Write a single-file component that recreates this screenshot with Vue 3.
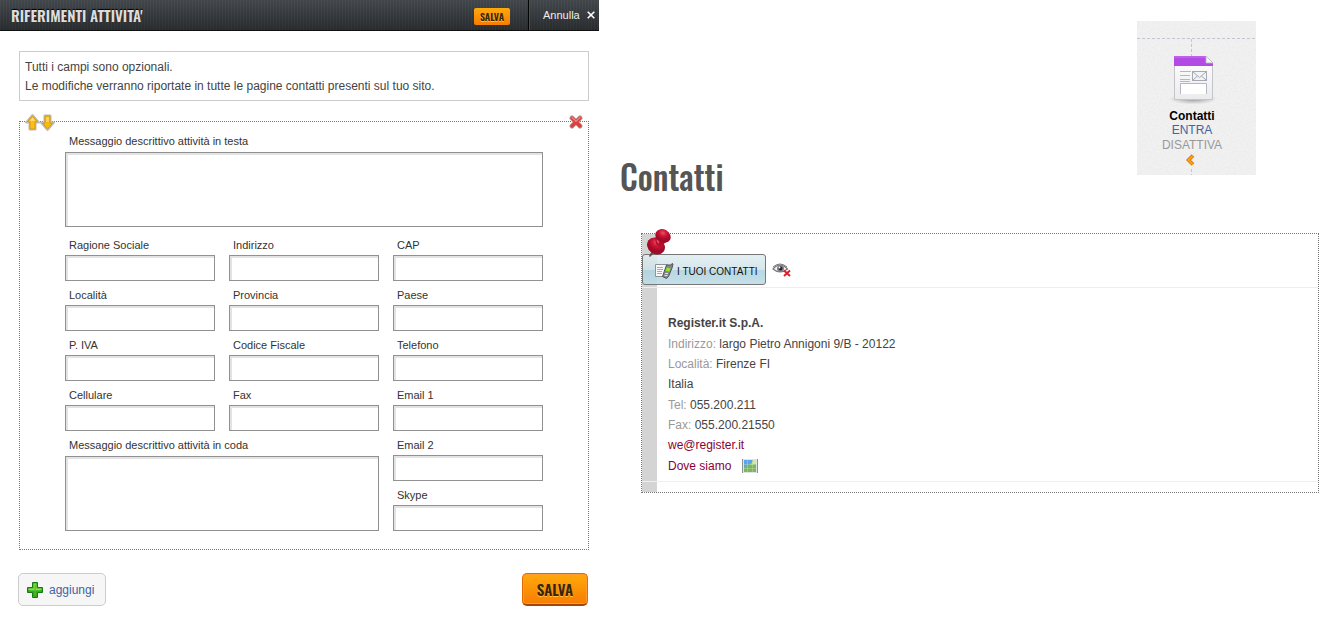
<script setup>
import { ref } from 'vue'

const rows = [
  [
    { id: 'ragione', label: 'Ragione Sociale' },
    { id: 'indirizzo', label: 'Indirizzo' },
    { id: 'cap', label: 'CAP' },
  ],
  [
    { id: 'localita', label: 'Località' },
    { id: 'provincia', label: 'Provincia' },
    { id: 'paese', label: 'Paese' },
  ],
  [
    { id: 'piva', label: 'P. IVA' },
    { id: 'cf', label: 'Codice Fiscale' },
    { id: 'telefono', label: 'Telefono' },
  ],
  [
    { id: 'cellulare', label: 'Cellulare' },
    { id: 'fax', label: 'Fax' },
    { id: 'email1', label: 'Email 1' },
  ],
]
const fields = rows.flat()
const values = ref({})

const contact = [
  { label: 'Indirizzo:', value: 'largo Pietro Annigoni 9/B - 20122' },
  { label: 'Località:', value: 'Firenze FI' },
  { label: '', value: 'Italia' },
  { label: 'Tel:', value: '055.200.211' },
  { label: 'Fax:', value: '055.200.21550' },
]
</script>

<template>
  <main class="page">
    <form class="editor" @submit.prevent>
      <header class="bar">
        <h2 class="bar-title">RIFERIMENTI ATTIVITA'</h2>
        <button type="submit" class="save save-small">SALVA</button>
        <button type="button" class="cancel">
          Annulla
          <svg class="cancel-x" viewBox="0 0 8 8" aria-hidden="true">
            <path d="M.7 .7L7.300 7.300M7.300 .7L.7 7.300" stroke="#fff" stroke-width="1.600" />
          </svg>
        </button>
      </header>

      <div class="editor-body">
        <p class="notice">
          Tutti i campi sono opzionali.<br />
          Le modifiche verranno riportate in tutte le pagine contatti presenti sul tuo sito.
        </p>

        <section class="block">
          <div class="movers">
            <button type="button" class="icon-btn" aria-label="Sposta su">
              <svg viewBox="0 0 15 17">
                <path d="M7.500 1L14 8.500H10.500V15.500H4.500V8.500H1Z" fill="#f5b613" stroke="#bdbdbd" stroke-width="2" stroke-linejoin="round" />
                <path d="M7.500 2L12.500 7.800H10V15H5V7.800H2.500Z" fill="#fbbd18" stroke="#d99a08" stroke-width="1" />
                <path d="M7.500 3.500L10 6.800H5Z" fill="#ffe08a" />
              </svg>
            </button>
            <button type="button" class="icon-btn" aria-label="Sposta giù">
              <svg viewBox="0 0 15 17">
                <path d="M7.500 16L14 8.500H10.500V1.500H4.500V8.500H1Z" fill="#f5b613" stroke="#bdbdbd" stroke-width="2" stroke-linejoin="round" />
                <path d="M7.500 15L12.500 9.200H10V2H5V9.200H2.500Z" fill="#fbb80c" stroke="#d99a08" stroke-width="1" />
                <path d="M6 3H9V8H6Z" fill="#fdd256" />
              </svg>
            </button>
          </div>
          <button type="button" class="icon-btn remove" aria-label="Elimina">
            <svg viewBox="0 0 14 14">
              <path d="M3 3L11 11M11 3L3 11" stroke="#b9a3a3" stroke-width="5" stroke-linecap="round" />
              <path d="M3 3L11 11M11 3L3 11" stroke="#dd3f3c" stroke-width="3.400" stroke-linecap="round" />
              <path d="M3 2.500L7 6.500L11 2.500" stroke="#f08582" stroke-width="1.200" fill="none" stroke-linecap="round" />
            </svg>
          </button>

          <div class="field field-head">
            <label for="testa">Messaggio descrittivo attività in testa</label>
            <textarea id="testa"></textarea>
          </div>

          <div class="grid">
            <div v-for="f in fields" :key="f.id" class="field">
              <label :for="f.id">{{ f.label }}</label>
              <input :id="f.id" v-model="values[f.id]" type="text" />
            </div>
            <div class="field field-tail">
              <label for="coda">Messaggio descrittivo attività in coda</label>
              <textarea id="coda"></textarea>
            </div>
            <div class="field">
              <label for="email2">Email 2</label>
              <input id="email2" type="text" />
            </div>
            <div class="field">
              <label for="skype">Skype</label>
              <input id="skype" type="text" />
            </div>
          </div>
        </section>

        <footer class="actions">
          <button type="button" class="add">
            <svg viewBox="0 0 16 16" aria-hidden="true">
              <path d="M5.500 .5H10.500V5.500H15.500V10.500H10.500V15.500H5.500V10.500H.5V5.500H5.500Z" fill="#35a51c" stroke="#187a12" />
              <path d="M6.500 1.500H9.500V6.500H14.500V8H1.500V6.500H6.500Z" fill="#8ee04e" />
              <path d="M7.500 2.500H8.800V8H13.500V9.200H8.800V13.500H7.500V9.200H2.500V8H7.500Z" fill="#4cc02c" />
            </svg>
            aggiungi
          </button>
          <button type="submit" class="save save-large">SALVA</button>
        </footer>
      </div>
    </form>

    <section class="preview">
      <div class="top">
        <h1>Contatti</h1>
        <nav class="tile">
          <svg class="grain" aria-hidden="true">
            <filter id="paper">
              <feTurbulence type="fractalNoise" baseFrequency="0.5" numOctaves="2" />
              <feColorMatrix values="0 0 0 0 .5  0 0 0 0 .5  0 0 0 0 .5  .24 0 0 0 -.09" />
            </filter>
            <rect width="100%" height="100%" filter="url(#paper)" />
          </svg>
          <svg class="doc" viewBox="-1 -1 50 50" aria-hidden="true">
            <defs>
              <linearGradient id="docfill" x1="0" y1="0" x2="0" y2="1">
                <stop offset="0" stop-color="#fff" />
                <stop offset="1" stop-color="#ebebee" />
              </linearGradient>
              <radialGradient id="shade">
                <stop offset="0" stop-color="#777" stop-opacity=".8" />
                <stop offset="1" stop-color="#999" stop-opacity="0" />
              </radialGradient>
            </defs>
            <ellipse cx="25" cy="43" rx="24" ry="5.500" fill="url(#shade)" />
            <path d="M6.500 .5H38L44.500 7V43.500H6.500Z" fill="url(#docfill)" stroke="#c3c3ca" />
            <path d="M6 0H38V7H45V10H6Z" fill="#b24be3" />
            <path d="M6 0H38V2H6Z" fill="#bd62e8" />
            <path d="M38 0V7H45Z" fill="#f6f6f8" stroke="#b9b5c2" stroke-width=".8" />
            <path d="M12 15.500H23M12 19.500H22M12 23.500H22M12 25.500H22" stroke="#b5b8c0" />
            <rect x="24.500" y="15.500" width="14" height="9" fill="#f2f3f5" stroke="#a5a9b3" />
            <path d="M25 16L31.500 21.500L38 16M25 24L29.500 20M38 24L33.500 20" fill="none" stroke="#a5a9b3" />
            <path d="M13 28H38V38H13Z" fill="#fff" />
            <path d="M12.500 38V27.500H38.500V38" fill="none" stroke="#b5b8c0" />
          </svg>
          <strong>Contatti</strong>
          <a href="#entra">ENTRA</a>
          <a href="#disattiva" class="off">DISATTIVA</a>
          <svg class="chevron" viewBox="0 0 9 12" aria-hidden="true">
            <path d="M7 1.500L2.500 6L7 10.500" fill="none" stroke="#d9780a" stroke-width="3.600" />
            <path d="M7 1.500L2.500 6L7 10.500" fill="none" stroke="#ffa71e" stroke-width="1.600" />
          </svg>
        </nav>
      </div>

      <article class="card">
        <svg class="pin" viewBox="0 0 28 30" aria-hidden="true">
          <defs>
            <radialGradient id="pinred" cx=".4" cy=".3">
              <stop offset="0" stop-color="#ea5068" />
              <stop offset=".5" stop-color="#cd1434" />
              <stop offset="1" stop-color="#a00a28" />
            </radialGradient>
          </defs>
          <path d="M8 23L10 25L6 29L5 28Z" fill="#555" />
          <ellipse cx="12" cy="18" rx="9.500" ry="8" transform="rotate(38 12 18)" fill="url(#pinred)" />
          <path d="M11 10L15 6L22 13L18 19Q15 20 12 16Z" fill="#b90c2b" />
          <path d="M12.500 12L15 9L17 11L14 16Z" fill="#e2526a" />
          <ellipse cx="19" cy="8" rx="8" ry="6.500" transform="rotate(30 19 8)" fill="url(#pinred)" />
        </svg>
        <div class="card-head">
          <button type="button" class="tab">
            <svg viewBox="0 0 20 18" aria-hidden="true">
              <path d="M1.500 2.500H13.500V14.500H1.500Z" fill="#f8f8f8" stroke="#8c9296" />
              <path d="M3 5.500H9M3 7.500H9M3 9.500H8M3 11.500H8" stroke="#a5aaad" />
              <path d="M12.500 3L17 3L18 1.500L19 2L18 6L14.500 14.500L12.500 16.500L8.500 14.500Z" fill="#85898c" stroke="#505457" />
              <path d="M12.800 5.500L16.500 6.500L15.300 9.500L11.600 8.700Z" fill="#8eea22" />
              <path d="M11 11.500H14M10.500 13.500H13.500" stroke="#ddd" />
            </svg>
            I TUOI CONTATTI
          </button>
          <button type="button" class="icon-btn eye" aria-label="Nascondi">
            <svg viewBox="0 0 19 14">
              <path d="M1 6Q8 -2 15.500 6Q8 12 1 6Z" fill="#f5f5f5" stroke="#77777b" stroke-width="1.200" />
              <path d="M1 4Q8 -2 15 4" fill="none" stroke="#77777b" />
              <circle cx="8.500" cy="5.500" r="3.500" fill="#7d808a" />
              <circle cx="8.500" cy="5.500" r="1.900" fill="#24262b" />
              <circle cx="7.500" cy="4.500" r=".9" fill="#fff" />
              <path d="M12 7.500L18 13M18 7.500L12 13" stroke="#d9212b" stroke-width="2" />
            </svg>
          </button>
        </div>
        <address class="details">
          <strong>Register.it S.p.A.</strong>
          <span v-for="c in contact" :key="c.value">
            <span v-if="c.label" class="key">{{ c.label }}&nbsp;</span>{{ c.value }}
          </span>
          <a href="mailto:we@register.it">we@register.it</a>
          <a href="#mappa">
            Dove siamo
            <svg class="map" viewBox="0 0 16 14" aria-hidden="true">
              <rect width="16" height="14" fill="#dfe5e5" />
              <rect x="2" y="1" width="12" height="12" fill="#7db363" />
              <path d="M2 1H12L10 4L8 4L6 7L2 8Z" fill="#5ba4ea" />
              <path d="M11 1H14V5L9 6Z" fill="#d8e6a0" />
              <path d="M2 5.500H14M2 9.500H14M5.500 1V13M10.500 1V13" stroke="#b9dc9c" stroke-opacity=".45" />
              <path d="M.5 0V14M15.500 0V14" stroke="#8b9296" />
            </svg>
          </a>
        </address>
      </article>
    </section>
  </main>
</template>

<style>
body {
  background: #fff;
}
</style>

<style scoped>
.page {
  display: grid;
  grid-template-columns: minmax(0, 599fr) minmax(0, 739fr);
  align-items: start;
  font-family: "Liberation Sans", Arial, sans-serif;
  font-size: 12px;
  color: #444;
}
button {
  font: inherit;
  margin: 0;
  padding: 0;
  border: 0;
  background: none;
  cursor: pointer;
}
svg {
  display: block;
}
a {
  text-decoration: none;
}
.bar {
  display: flex;
  align-items: center;
  box-sizing: border-box;
  height: 31px;
  padding-left: 11px;
  border-bottom: 1px solid #111;
  background:
    repeating-linear-gradient(90deg, rgba(255, 255, 255, 0.03) 0 1px, transparent 1px 3px),
    linear-gradient(#42474c, #282b2e);
}
.bar-title {
  flex: 1;
  margin: 0;
  font: 600 15px/30px Oswald, "Liberation Sans Narrow", "Roboto Condensed", "Liberation Sans", sans-serif;
  color: #ddd;
  text-shadow: 0 -1px 1px #000;
}
.save {
  font-family: Oswald, "Liberation Sans Narrow", "Roboto Condensed", "Liberation Sans", sans-serif;
  font-weight: 600;
  color: #3a2408;
  text-shadow: 0 1px 0 #ffc04a;
  background: linear-gradient(#ffa90c, #f87c00);
}
.save-small {
  width: 36px;
  height: 17px;
  margin: 2px 18px 0 0;
  font-size: 10px;
  line-height: 17px;
  border-radius: 2px;
}
.save-large {
  width: 66px;
  height: 33px;
  font-size: 15px;
  border-radius: 5px;
  border: 1px solid #e36a00;
  border-bottom: 2px solid #a84600;
  box-shadow: inset 0 0 0 1px #ff9c2c;
}
.cancel {
  display: flex;
  align-items: center;
  justify-content: space-between;
  box-sizing: border-box;
  width: 71px;
  height: 30px;
  padding: 0 4px 0 14px;
  border-left: 1px solid #050505;
  box-shadow: inset 1px 0 0 #4c5054;
  font-size: 11px;
  color: #eee;
}
.cancel-x {
  width: 8px;
  height: 8px;
}
.editor-body {
  padding: 20px 10px 18px 19px;
}
.notice {
  margin: 0;
  padding: 6px 5px 4px;
  border: 1px solid #ccc;
  line-height: 19px;
}
.block {
  position: relative;
  margin-top: 20px;
  padding: 9px 45px 18px;
  border: 1px dotted #777;
}
.movers {
  position: absolute;
  top: -8px;
  left: 5px;
  display: flex;
}
.icon-btn svg {
  width: 15px;
  height: 17px;
}
.remove {
  position: absolute;
  top: -7px;
  right: 5px;
}
.remove svg {
  width: 14px;
  height: 14px;
}
.field {
  display: flex;
  flex-direction: column;
}
.field label {
  padding-left: 4px;
  font-size: 11px;
  line-height: 20px;
  color: #333;
}
.field input,
.field textarea {
  box-sizing: border-box;
  width: 100%;
  height: 26px;
  margin: 0;
  border: 1px solid #919191;
  border-radius: 0;
  background: #fff;
  box-shadow: inset 2px 2px 0 #e3e3e3;
  font: inherit;
  resize: none;
  outline: none;
}
.field textarea {
  height: 75px;
}
.field-head {
  gap: 1px;
  margin-bottom: 8px;
}
.grid {
  display: grid;
  grid-template-columns: repeat(3, minmax(0, 1fr));
  gap: 4px 14px;
}
.field-tail {
  grid-column: span 2;
  grid-row: span 2;
  justify-content: space-between;
}
.actions {
  display: flex;
  justify-content: space-between;
  margin: 23px 1px 0 -1px;
}
.add {
  display: flex;
  align-items: center;
  gap: 6px;
  box-sizing: border-box;
  min-width: 88px;
  height: 33px;
  padding: 0 8px;
  border: 1px solid #ccc;
  border-radius: 5px;
  background: #f6f6f6;
  color: #4262a4;
}
.add svg {
  width: 16px;
  height: 16px;
}
.preview {
  padding: 21px 19px 0 21px;
}
.top {
  display: flex;
  align-items: flex-start;
  justify-content: space-between;
  padding-right: 63px;
}
h1 {
  margin: 136px 0 0;
  font: 500 33px/40px Oswald, "Liberation Sans Narrow", "Roboto Condensed", "Liberation Sans", sans-serif;
  color: #555;
}
.tile {
  position: relative;
  display: flex;
  flex-direction: column;
  align-items: center;
  box-sizing: border-box;
  width: 119px;
  height: 154px;
  padding: 34px 9px 0 0;
  background:
    repeating-linear-gradient(90deg, #c2c6d0 0 3px, transparent 3px 5px) 0 17px / 100% 1px no-repeat,
    repeating-linear-gradient(#c2c6d0 0 3px, transparent 3px 5px) 54px 18px / 1px 18px no-repeat,
    repeating-linear-gradient(#c2c6d0 0 3px, transparent 3px 5px) 54px 100% / 1px 6px no-repeat,
    #f1f1f1;
  line-height: 15px;
}
.tile > * {
  position: relative;
}
.tile .grain {
  position: absolute;
  inset: 0;
  width: 100%;
  height: 100%;
}
.doc {
  width: 50px;
  height: 50px;
  margin-bottom: 4px;
}
.tile strong {
  color: #000;
  line-height: 14px;
}
.tile a {
  color: #4262a4;
}
.tile .off {
  color: #999;
}
.chevron {
  width: 9px;
  height: 12px;
  margin: 1px 4px 0 0;
}
.card {
  position: relative;
  margin: 36px 0 0 21px;
  padding-bottom: 10px;
  border: 1px dotted #777;
  background: linear-gradient(#d4d4d4, #d4d4d4) 0 0 / 15px 100% no-repeat;
}
.pin {
  position: absolute;
  top: -6px;
  left: 2px;
  width: 28px;
  height: 30px;
}
.card-head {
  display: flex;
  align-items: center;
  padding: 20px 0 2px;
  border-bottom: 1px solid #eee;
}
.tab {
  display: flex;
  align-items: center;
  gap: 3px;
  box-sizing: border-box;
  min-width: 123px;
  height: 31px;
  padding: 3px 7px 0 11px;
  border: 1px solid #777;
  border-radius: 3px;
  background: linear-gradient(rgba(223, 236, 240, 0.85), rgba(207, 227, 233, 0.85) 50%, rgba(176, 211, 222, 0.9) 51%, rgba(190, 220, 229, 0.9));
  font-size: 10px;
  color: #111;
}
.tab svg {
  width: 20px;
  height: 18px;
}
.eye {
  margin-left: 6px;
}
.eye svg {
  width: 19px;
  height: 14px;
}
.details {
  display: flex;
  flex-direction: column;
  padding: 25px 0 5px 26px;
  border-bottom: 1px solid #eee;
  font-style: normal;
  line-height: 20px;
}
.details > :nth-child(3n + 1) {
  margin-bottom: 1px;
}
.key {
  color: #999;
}
.details a {
  display: flex;
  align-items: center;
  gap: 11px;
  color: #8b0032;
}
.map {
  width: 16px;
  height: 14px;
}
</style>
